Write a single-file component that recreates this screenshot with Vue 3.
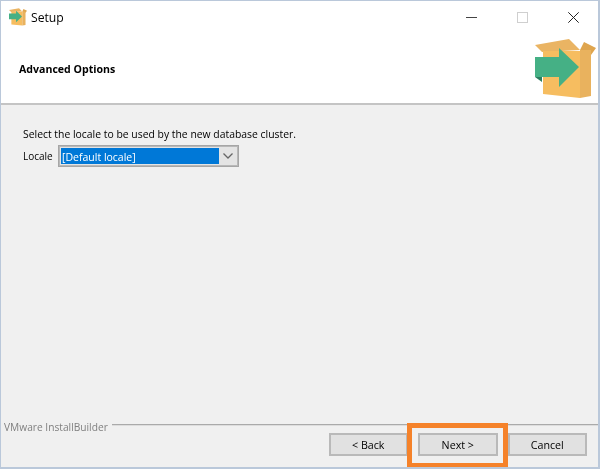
<script setup>
const title = 'Setup'
</script>

<template>
  <div class="window">
    <header class="head">
      <div class="titlebar">
        <svg class="app-icon" width="18" height="18" viewBox="0 0 61 60">
          <path d="M0 6 34 0 45 11 7 13Z" fill="#eab463" />
          <path d="M45 11 49 3 61 9 56 16Z" fill="#dfa54e" />
          <path d="M8 12H45V59L8 55Z" fill="#f6bd60" />
          <path d="M45 11H56V57L45 59Z" fill="#e9b25e" />
          <path d="M0 18H24V9L44 28 24 48V38H0Z" fill="#45b085" />
        </svg>
        <span class="title">{{ title }}</span>
        <div class="controls">
          <svg width="11" height="11" viewBox="0 0 11 11"><path d="M0 5.500H11" stroke="#444" stroke-width="1" /></svg>
          <svg width="11" height="11" viewBox="0 0 11 11"><rect x="0.500" y="0.500" width="10" height="10" fill="#fff" stroke="#cfcfcf" /></svg>
          <svg width="11" height="11" viewBox="0 0 11 11"><path d="M0.300 0.300 10.700 10.700M10.700 0.300 0.300 10.700" stroke="#222" stroke-width="1" fill="none" /></svg>
        </div>
      </div>
      <div class="banner">
        <strong class="heading">Advanced Options</strong>
        <svg class="logo" width="61" height="60" viewBox="0 0 61 60">
          <path d="M0 6 34 0 45 11 7 13Z" fill="#eab463" />
          <path d="M45 11 49 3 61 9 56 16Z" fill="#dfa54e" />
          <path d="M8 12H45V59L8 55Z" fill="#f6bd60" />
          <path d="M45 11H56V57L45 59Z" fill="#e9b25e" />
          <path d="M0 38 7 43V38Z" fill="#2a7d5f" />
          <path d="M0 18H24V9L44 28 24 48V38H0Z" fill="#45b085" />
        </svg>
      </div>
    </header>

    <main class="content">
      <p class="intro">Select the locale to be used by the new database cluster.</p>
      <div class="field">
        <label class="field-label">Locale</label>
        <div class="select">
          <span class="select-value">[Default locale]</span>
          <span class="select-arrow">
            <svg width="10" height="6" viewBox="0 0 10 6"><path d="M0.500 0.500 5 5 9.500 0.500" fill="none" stroke="#666" stroke-width="1.300" /></svg>
          </span>
        </div>
      </div>
    </main>

    <footer class="foot">
      <div class="brand-row">
        <span class="brand">VMware InstallBuilder</span>
        <span class="rule"></span>
      </div>
      <div class="buttons">
        <button class="btn">&lt; Back</button>
        <button class="btn">Next &gt;</button>
        <button class="btn">Cancel</button>
      </div>
    </footer>

    <div class="highlight"></div>
  </div>
</template>

<style>
html, body { margin: 0; padding: 0; background: #fff; }
</style>

<style scoped>
.window {
  position: relative;
  box-sizing: border-box;
  width: 600px;
  height: 469px;
  display: flex;
  flex-direction: column;
  border: 1px solid #bac8da;
  border-bottom-width: 2px;
  border-right-width: 2px;
  background: #f0f0f0;
  font-family: "Open Sans", "Noto Sans", sans-serif;
  font-size: 10.400px;
  color: #000;
  overflow: hidden;
  filter: blur(0.3px);
}
.head {
  flex: none;
  height: 104px;
  box-sizing: border-box;
  background: #fff;
  border-bottom: 2px solid #c4c4c4;
  display: flex;
  flex-direction: column;
}
.titlebar {
  height: 32px;
  display: flex;
  align-items: center;
  padding-left: 8px;
}
.app-icon { margin-right: 4px; }
.title { font-size: 12.200px; color: #000; }
.controls {
  margin-left: auto;
  display: flex;
  gap: 40px;
  padding-right: 19px;
}
.banner {
  flex: 1;
  display: flex;
  justify-content: space-between;
  padding-left: 18px;
  padding-right: 2px;
}
.heading { font-size: 10.600px; font-weight: 700; margin-top: 29px; color: #000; }
.logo { margin-top: 6px; }
.content {
  flex: 1;
  padding: 22px 0 0 22px;
}
.intro { margin: 0; line-height: 14px; }
.field {
  display: flex;
  align-items: center;
  margin-top: 4px;
}
.field-label { width: 35px; font-size: 10px; }
.select {
  box-sizing: border-box;
  width: 181px;
  height: 22px;
  display: flex;
  padding: 2px;
  border: 1px solid #a6a6a6;
  box-shadow: inset 0 0 0 1px #b8b8b8;
  background: #e4e4e4;
}
.select-value {
  flex: 1;
  background: #0078d7;
  color: #fff;
  padding-left: 1px;
  line-height: 18px;
  font-size: 10.500px;
}
.select-arrow {
  width: 17px;
  display: flex;
  align-items: center;
  justify-content: center;
}
.foot {
  flex: none;
  height: 48px;
  display: flex;
  flex-direction: column;
}
.brand-row {
  display: flex;
  align-items: flex-start;
  height: 12px;
  padding-left: 3px;
}
.brand { color: #808080; font-size: 10.200px; margin-top: 1px; margin-right: 4px; }
.rule { flex: 1; margin-top: 5px; border-top: 1px solid #aaa; border-bottom: 1px solid #ddd; }
.buttons {
  display: flex;
  justify-content: flex-end;
  gap: 10px;
  padding-right: 11px;
  margin-top: 2px;
}
.btn {
  box-sizing: border-box;
  width: 79.500px;
  height: 23px;
  padding: 1px 0 0;
  border: 2px solid #b9b9b9;
  background: #e1e1e1;
  font: inherit;
  font-size: 10.700px;
  color: #000;
}
.highlight {
  position: absolute;
  left: 406px;
  top: 422px;
  width: 101px;
  height: 44px;
  box-sizing: border-box;
  border: 5px solid #f5822a;
  border-bottom-width: 4px;
}
</style>
